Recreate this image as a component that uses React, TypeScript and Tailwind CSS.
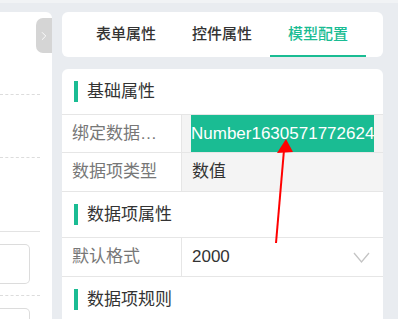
import { ChevronRight } from "lucide-react";

const green = "text-[#1abc93]";

const Section = ({ title }: { title: string }) => (
  <div className="flex h-[46px] items-center border-b border-[#e6e6e6] pl-3">
    <span className="h-[21px] w-1 bg-[#1abc93]" />
    <span className="ml-[9px] text-[17px] text-[#333]">{title}</span>
  </div>
);

const Row = ({
  label,
  children,
  gray,
  h = "h-[39px]",
}: {
  label: string;
  children: React.ReactNode;
  gray?: boolean;
  h?: string;
}) => (
  <div className={`flex ${h} border-b border-[#e6e6e6]`}>
    <div className="flex w-[120px] shrink-0 items-center border-r border-[#e6e6e6] pl-[10px]">
      <span className="w-[88px] truncate text-[17px] text-[#777]">{label}</span>
    </div>
    <div
      className={`flex flex-1 items-center overflow-hidden pl-[10px] text-[17px] text-[#333] ${
        gray ? "bg-[#f4f4f4]" : "bg-white"
      }`}
    >
      {children}
    </div>
  </div>
);

export default function App() {
  return (
    <div className="relative h-[319px] w-[398px] overflow-hidden bg-[#e9ecf0] font-['Liberation_Sans','Noto_Sans_CJK_SC',sans-serif]">
      <div className="h-[3px] bg-[#f1f3f5]" />
      <div className="mt-[9px] flex h-[307px] gap-[10px]">
        {/* left panel (cut off) */}
        <div className="relative w-[52px] shrink-0 rounded-tr-[6px] bg-white">
          <div className="absolute right-0 top-[6px] flex h-[35px] w-4 items-center justify-center rounded-l-[7px] bg-[#d5d5d5]">
            <ChevronRight size={14} strokeWidth={1.5} className="text-white" />
          </div>
          <div className="flex flex-col">
            <div className="mt-[82px] w-[40px] border-t border-dashed border-[#dcdcdc]" />
            <div className="mt-[62px] w-[40px] border-t border-dashed border-[#dcdcdc]" />
            <div className="mt-[73px] w-[40px] border-t border-[#e3e3e3]" />
            <div className="mt-[12px] h-[40px] w-[30px] rounded-r-[5px] border border-l-0 border-[#dcdcdc]" />
            <div className="mt-[11px] w-[40px] border-t border-dashed border-[#dcdcdc]" />
            <div className="mt-[12px] h-[40px] w-[30px] rounded-r-[5px] border border-l-0 border-[#dcdcdc]" />
          </div>
        </div>

        {/* right column */}
        <div className="flex w-[321px] shrink-0 flex-col gap-[12px]">
          <div className="flex h-[46px] rounded-[6px] bg-white px-4">
            <div className="flex h-[45px] w-[96px] items-center justify-center text-[15px] font-medium text-[#333]">
              表单属性
            </div>
            <div className="flex h-[45px] w-[96px] items-center justify-center text-[15px] font-medium text-[#333]">
              控件属性
            </div>
            <div
              className={`flex h-[45px] w-[96px] items-center justify-center border-b-2 border-[#1abc93] pt-[2px] text-[15px] font-medium ${green}`}
            >
              模型配置
            </div>
          </div>

          <div className="flex-1 rounded-t-[6px] bg-white">
            <Section title="基础属性" />
            <Row label="绑定数据项编码" gray h="h-[38px]">
              <span className="-ml-[1px] flex h-full items-center whitespace-nowrap bg-[#1abc93] text-white">
                Number1630571772624
              </span>
            </Row>
            <Row label="数据项类型" gray>
              数值
            </Row>
            <Section title="数据项属性" />
            <Row label="默认格式">
              <span className="flex-1">2000</span>
              <svg width="17" height="12" viewBox="0 0 17 12" className="mr-[13px] mt-[2px]">
                <polyline points="1,1 8.5,10 16,1" fill="none" stroke="#c4c4c4" strokeWidth="1.3" />
              </svg>
            </Row>
            <Section title="数据项规则" />
          </div>
        </div>
      </div>

      {/* annotation arrow */}
      <svg className="pointer-events-none absolute left-0 top-0" width="398" height="319">
        <line x1="276" y1="243" x2="284" y2="150" stroke="#ff0000" strokeWidth="2" />
        <polygon points="286,139 277,153 293,152" fill="#ff0000" />
      </svg>
    </div>
  );
}
